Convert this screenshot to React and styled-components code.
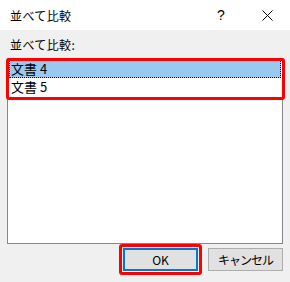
import React from 'react';
import styled, { createGlobalStyle } from 'styled-components';

const GlobalStyle = createGlobalStyle`
  html, body {
    margin: 0;
    padding: 0;
    background: #f0f0f0;
  }
  body {
    font-family: "Noto Sans CJK JP", "Noto Sans", sans-serif;
    font-size: 12px;
    color: #000;
  }
`;

const Dialog = styled.div`
  width: 290px;
  height: 282px;
  display: flex;
  flex-direction: column;
  background: #f0f0f0;
  overflow: hidden;
`;

const TitleBar = styled.div`
  height: 30px;
  background: #fff;
  display: flex;
  align-items: center;
  padding-left: 10px;
  flex-shrink: 0;
`;

const Title = styled.div`
  flex: 1;
  font-size: 12px;
  letter-spacing: 0.4px;
  color: #000;
`;

const TitleButton = styled.div`
  width: 46px;
  height: 30px;
  display: flex;
  align-items: center;
  justify-content: center;
  font-family: "Liberation Sans", sans-serif;
  font-size: 14px;
`;

const Body = styled.div`
  flex: 1;
  display: flex;
  flex-direction: column;
  padding: 7px 7px 0 7px;
`;

const Label = styled.div`
  height: 16px;
  line-height: 16px;
  margin-left: 3px;
  margin-bottom: 5px;
  letter-spacing: 0.4px;
`;

const ListBox = styled.div`
  position: relative;
  box-sizing: border-box;
  height: 186px;
  background: #fff;
  border: 1px solid #828790;
  padding: 1px;
`;

const Item = styled.div`
  height: 18px;
  line-height: 18px;
  padding-left: 2px;
  font-size: 13px;
  background: ${(p) => (p.$selected ? '#99c9ef' : 'transparent')};
  outline: ${(p) => (p.$selected ? '1px dotted #000' : 'none')};
  outline-offset: -1px;
`;

const Highlight = styled.div`
  position: absolute;
  left: -2px;
  top: -1px;
  width: 273px;
  height: 36px;
  border: 3px solid #ff0000;
  border-radius: 3px;
`;

const ButtonRow = styled.div`
  display: flex;
  justify-content: flex-end;
  gap: 10px;
  margin-top: 4px;
`;

const Button = styled.button`
  position: relative;
  width: 75px;
  height: 23px;
  box-sizing: border-box;
  background: #e1e1e1;
  border: ${(p) => (p.$default ? '2px solid #0078d7' : '1px solid #adadad')};
  font-family: "Noto Sans CJK JP", "Noto Sans", sans-serif;
  font-size: 12px;
  letter-spacing: ${(p) => (p.$default ? '0' : '-1px')};
  color: #000;
  padding: 0;
`;

const ButtonHighlight = styled.div`
  position: absolute;
  left: -6px;
  top: -6px;
  right: -6px;
  bottom: -6px;
  border: 3px solid #ff0000;
  border-radius: 3px;
`;

export default function App() {
  return (
    <Dialog>
      <GlobalStyle />
      <TitleBar>
        <Title>並べて比較</Title>
        <TitleButton>?</TitleButton>
        <TitleButton>
          <svg width="11" height="11" viewBox="0 0 11 11">
            <path d="M0.5 0.5 L10.5 10.5 M10.5 0.5 L0.5 10.5" stroke="#000" strokeWidth="1" />
          </svg>
        </TitleButton>
      </TitleBar>
      <Body>
        <Label>並べて比較:</Label>
        <ListBox>
          <Item $selected>文書 4</Item>
          <Item>文書 5</Item>
          <Highlight />
        </ListBox>
        <ButtonRow>
          <Button $default>
            OK
            <ButtonHighlight />
          </Button>
          <Button>キャンセル</Button>
        </ButtonRow>
      </Body>
    </Dialog>
  );
}
